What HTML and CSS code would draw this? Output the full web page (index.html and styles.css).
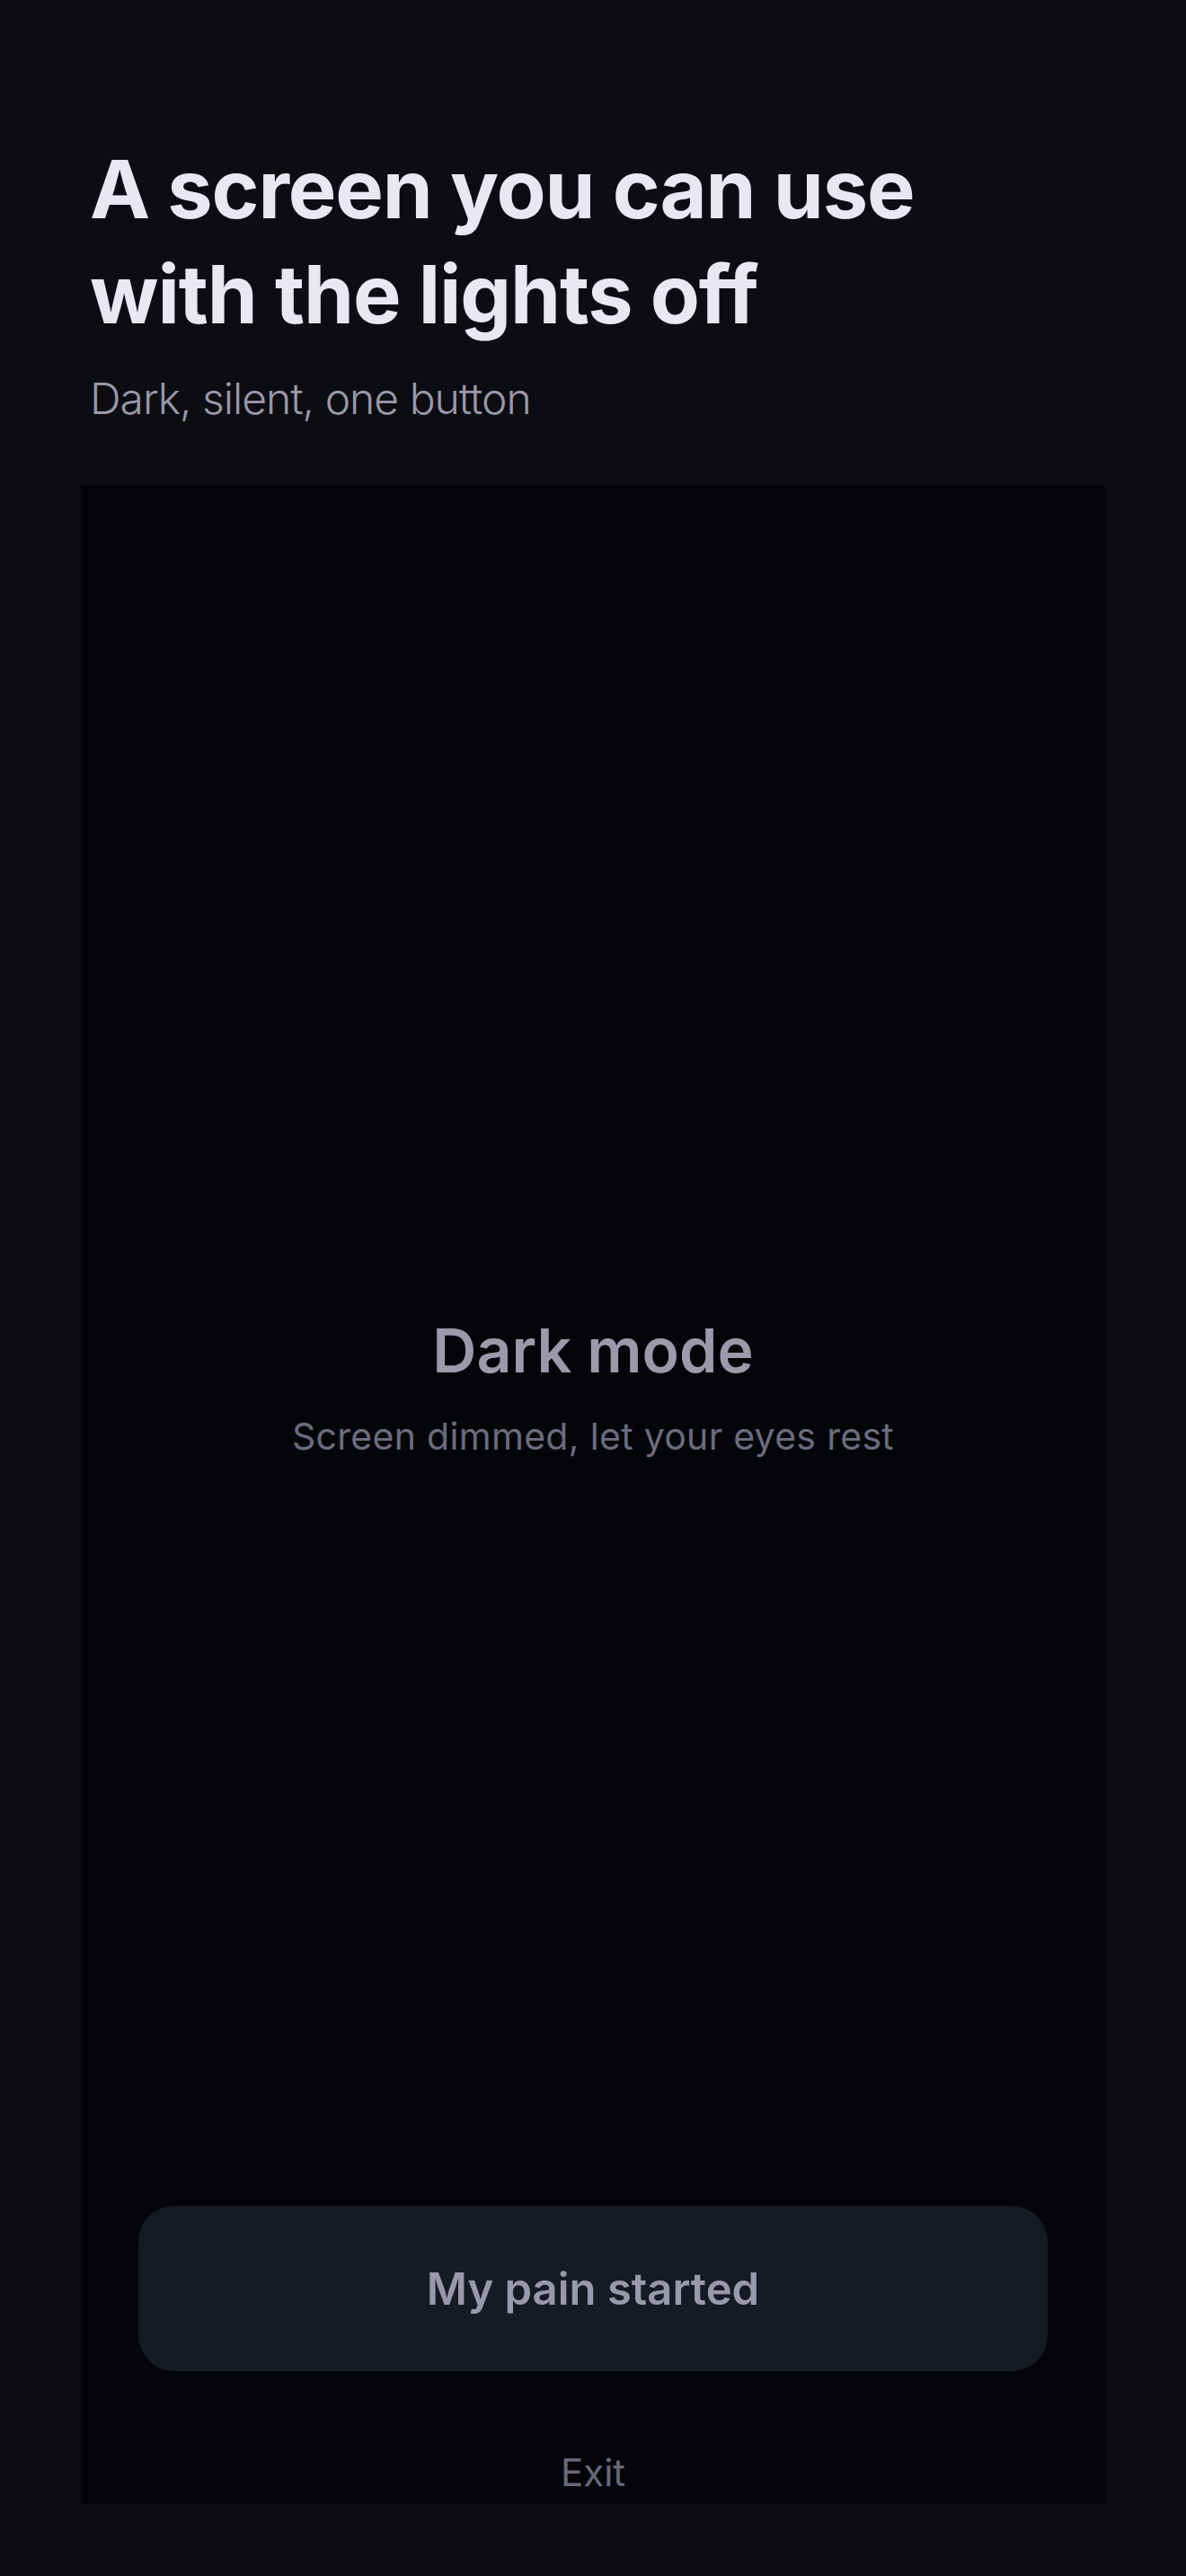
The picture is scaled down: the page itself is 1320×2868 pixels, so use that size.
FILE: index.html
```html
<!DOCTYPE html>
<html lang="en">
<head>
<meta charset="utf-8">
<title>Dark mode</title>
<link rel="stylesheet" href="styles.css">
</head>
<body>
<header class="intro">
  <h1 class="title">A screen you can use<br>with the lights off</h1>
  <p class="lead">Dark, silent, one button</p>
</header>
<main class="screen">
  <div class="center">
    <div class="message">
      <h2 class="mode">Dark mode</h2>
      <p class="hint">Screen dimmed, let your eyes rest</p>
    </div>
  </div>
  <button class="primary" type="button">My pain started</button>
  <button class="exit" type="button">Exit</button>
</main>
</body>
</html>
```

FILE: styles.css
```css
* { box-sizing: border-box; }
html, body {
  margin: 0;
  padding: 0;
  background: #0c0d12;
}
body {
  font-family: Inter, "Noto Sans", "Liberation Sans", sans-serif;
  min-height: 2868px;
  font-variant-ligatures: none;
  font-feature-settings: "liga" 0, "calt" 0;
}
.intro {
  padding: 152px 100px 0 100px;
}
.title {
  margin: 0;
  font-size: 90px;
  line-height: 117px;
  font-weight: 700;
  color: #e9e7f2;
  letter-spacing: -1.1px;
}
.lead {
  margin: 28px 0 0 0;
  font-size: 48px;
  line-height: 60px;
  font-weight: 300;
  color: #9a98a9;
  letter-spacing: -1px;
}
.screen {
  margin: 66px 90px 0 90px;
  height: 2248px;
  background: #040509;
  display: flex;
  flex-direction: column;
  padding-bottom: 9px;
}
.center {
  flex: 1;
  padding-top: 90px;
  display: flex;
  align-items: center;
  justify-content: center;
}
.message {
  text-align: center;
}
.mode {
  margin: 0;
  font-size: 68px;
  line-height: 82px;
  font-weight: 600;
  color: #9b9aab;
}
.hint {
  margin: 30px 0 0 0;
  font-size: 41px;
  line-height: 50px;
  font-weight: 400;
  color: #6b6c7d;
  letter-spacing: 0.3px;
}
.primary {
  margin: 0 64px;
  height: 184px;
  border: 0;
  border-radius: 40px;
  background: #181a23;
  color: #9a99ab;
  font-family: inherit;
  font-size: 49px;
  font-weight: 600;
  cursor: pointer;
}
.exit {
  margin: 87px auto 0 auto;
  padding: 0;
  border: 0;
  background: transparent;
  color: #676979;
  font-family: inherit;
  font-size: 42px;
  line-height: 52px;
  font-weight: 400;
  cursor: pointer;
}
```
